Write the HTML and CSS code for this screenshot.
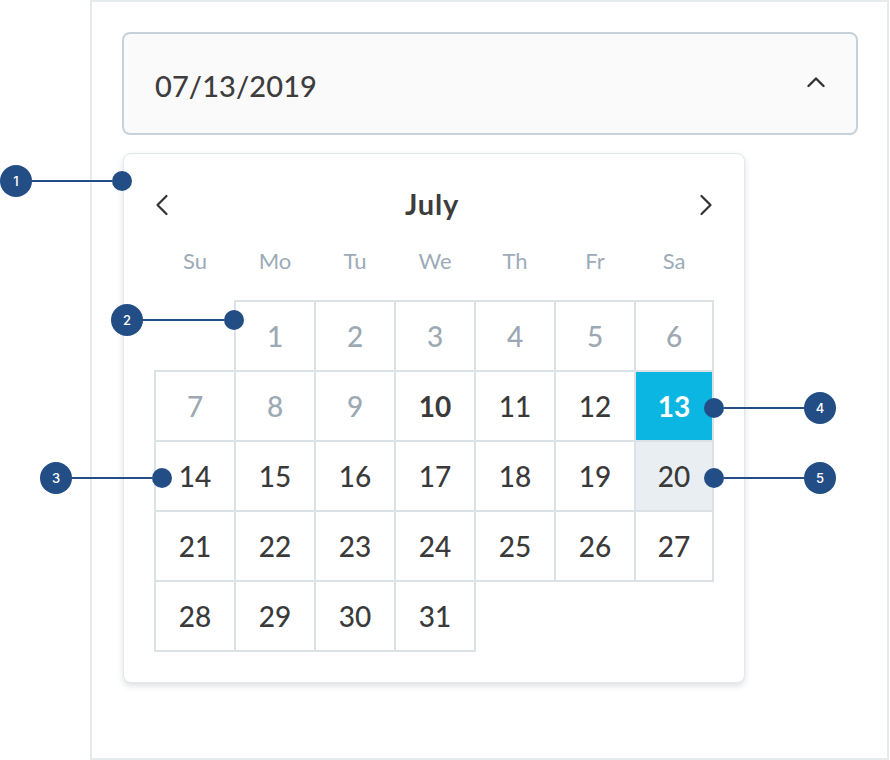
FILE: index.html
```html
<!DOCTYPE html>
<html lang="en">
<head>
<meta charset="utf-8">
<title>Datepicker</title>
<link rel="stylesheet" href="styles.css">
</head>
<body>
<div class="frame">
  <div class="input">
    <span class="value">07/13/2019</span>
    <svg class="caret" width="18" height="12" viewBox="0 0 18 12"><polyline points="1.5,10 9,2.5 16.5,10" fill="none" stroke="#333" stroke-width="2.4" stroke-linecap="round" stroke-linejoin="round"/></svg>
  </div>
  <div class="popup">
    <div class="head">
      <svg class="nav" width="14" height="22" viewBox="0 0 14 22"><polyline points="11.5,2 2.5,11 11.5,20" fill="none" stroke="#333" stroke-width="2.2" stroke-linecap="round" stroke-linejoin="round"/></svg>
      <span class="month">July</span>
      <svg class="nav" width="14" height="22" viewBox="0 0 14 22"><polyline points="2.5,2 11.5,11 2.5,20" fill="none" stroke="#333" stroke-width="2.2" stroke-linecap="round" stroke-linejoin="round"/></svg>
    </div>
    <div class="dows">
      <span>Su</span><span>Mo</span><span>Tu</span><span>We</span><span>Th</span><span>Fr</span><span>Sa</span>
    </div>
    <div class="days">
      <div class="d past first">1</div>
      <div class="d past">2</div>
      <div class="d past">3</div>
      <div class="d past">4</div>
      <div class="d past">5</div>
      <div class="d past">6</div>
      <div class="d past">7</div>
      <div class="d past">8</div>
      <div class="d past">9</div>
      <div class="d today">10</div>
      <div class="d">11</div>
      <div class="d">12</div>
      <div class="d selected">13</div>
      <div class="d">14</div>
      <div class="d">15</div>
      <div class="d">16</div>
      <div class="d">17</div>
      <div class="d">18</div>
      <div class="d">19</div>
      <div class="d hover">20</div>
      <div class="d">21</div>
      <div class="d">22</div>
      <div class="d">23</div>
      <div class="d">24</div>
      <div class="d">25</div>
      <div class="d">26</div>
      <div class="d">27</div>
      <div class="d">28</div>
      <div class="d">29</div>
      <div class="d">30</div>
      <div class="d">31</div>
    </div>
  </div>
</div>

<div class="callout c1"><span class="num">1</span><span class="line"></span><span class="dot"></span></div>
<div class="callout c2"><span class="num">2</span><span class="line"></span><span class="dot"></span></div>
<div class="callout c3"><span class="num">3</span><span class="line"></span><span class="dot"></span></div>
<div class="callout c4"><span class="dot"></span><span class="line"></span><span class="num">4</span></div>
<div class="callout c5"><span class="dot"></span><span class="line"></span><span class="num">5</span></div>
</body>
</html>
```

FILE: styles.css
```css
* { box-sizing: border-box; }

html, body {
  margin: 0;
  padding: 0;
  background: #ffffff;
}

body {
  font-family: "Lato", "Liberation Sans", sans-serif;
  font-weight: 500;
  color: #3d3d3d;
  width: 890px;
  height: 760px;
  position: relative;
  overflow: hidden;
}

.frame {
  margin-left: 90px;
  width: 799px;
  height: 760px;
  border: 2px solid #e6ebee;
  padding: 30px 0 0 30px;
}

.input {
  width: 736px;
  height: 103px;
  border: 2px solid #c7d1d9;
  border-radius: 8px;
  background: #fafafa;
  display: flex;
  align-items: center;
  justify-content: space-between;
  padding: 0 31px 0 31px;
}

.value {
  font-size: 29px;
  color: #3d3d3d;
  letter-spacing: 0.1px;
  margin-top: 3px;
}

.caret { display: block; margin-top: -4px; }

.popup {
  margin-top: 18px;
  margin-left: 1px;
  width: 622px;
  height: 530px;
  border: 1px solid #e3e8ec;
  border-radius: 8px;
  background: #ffffff;
  box-shadow: 0 3px 6px rgba(40, 60, 80, 0.16);
  padding: 31px 31px 31px 31px;
}

.head {
  height: 40px;
  display: flex;
  align-items: center;
  justify-content: space-between;
}

.nav { display: block; }

.month {
  font-size: 29px;
  font-weight: 700;
  color: #3d3d3d;
  letter-spacing: 0.8px;
  margin-left: -4px;
  margin-bottom: 4px;
}

.dows {
  margin-top: 15px;
  height: 40px;
  display: grid;
  grid-template-columns: repeat(6, 80px) 78px;
  align-items: center;
  justify-items: center;
  font-size: 22px;
  font-weight: 400;
  color: #9cabb7;
}

.days {
  margin-top: 21px;
  display: grid;
  grid-template-columns: repeat(6, 80px) 78px;
  grid-auto-rows: 70px;
}

.d {
  margin: -1px;
  border: 2px solid #dbe2e6;
  display: flex;
  align-items: center;
  justify-content: center;
  font-size: 28px;
  color: #3a3a3a;
  background-clip: padding-box;
}

.d.first { grid-column-start: 2; }

.d.past { color: #9ca9b4; }

.d.today { font-weight: 700; }

.d.selected {
  background-color: #0bb6e3;
  color: #ffffff;
  font-weight: 700;
}

.d.hover { background-color: #e8eef1; }

.callout {
  position: absolute;
  display: flex;
  align-items: center;
}

.num {
  width: 32px;
  height: 32px;
  border-radius: 50%;
  background: #234d85;
  color: #ffffff;
  font-family: "Inter", "Liberation Sans", sans-serif;
  font-size: 13px;
  font-weight: 500;
  display: flex;
  align-items: center;
  justify-content: center;
}

.line {
  width: 80px;
  height: 2px;
  background: #234d85;
}

.dot {
  width: 20px;
  height: 20px;
  border-radius: 50%;
  background: #234d85;
}

.c1 { left: 0; top: 165px; }
.c2 { left: 111px; top: 304px; }
.c2 .line { width: 81px; }
.c3 { left: 40px; top: 462px; }
.c4 { left: 704px; top: 392px; }
.c5 { left: 704px; top: 462px; }
```
